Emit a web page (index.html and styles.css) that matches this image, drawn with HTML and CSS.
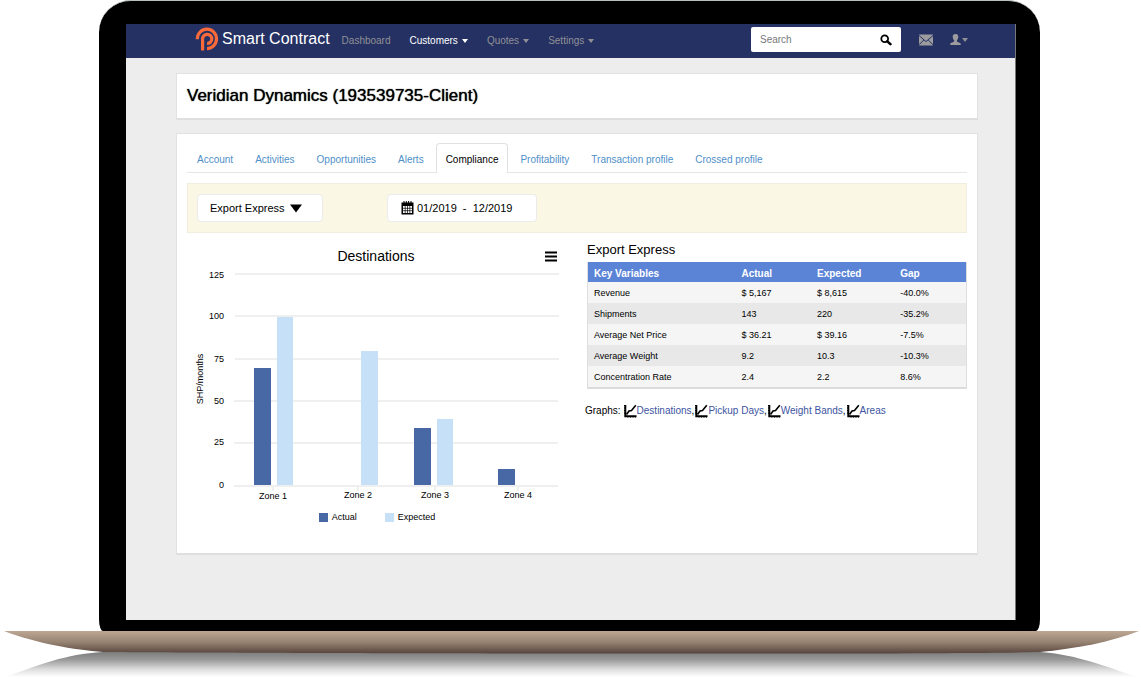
FILE: index.html
```html
<!DOCTYPE html>
<html lang="en">
<head>
<meta charset="utf-8">
<title>Smart Contract</title>
<link rel="stylesheet" href="styles.css">
</head>
<body>
<div class="laptop">
  <div class="screen">
    <header class="navbar">
      <div class="brand">
        <svg class="logo" viewBox="0 0 24 24" aria-hidden="true"><path d="M2.3 12.2A9.6 9.7 0 1 1 12 21.6M7.6 23.6V12A4.6 4.6 0 1 1 12 16.5"/></svg>
        <span>Smart Contract</span>
      </div>
      <nav class="menu">
        <a href="#">Dashboard</a>
        <a href="#" class="current">Customers<i class="caret"></i></a>
        <a href="#">Quotes<i class="caret"></i></a>
        <a href="#">Settings<i class="caret"></i></a>
      </nav>
      <form class="search">
        <input type="text" placeholder="Search" aria-label="Search">
        <button type="button" aria-label="Run search">
          <svg width="12" height="12" viewBox="0 0 12 12"><circle cx="4.7" cy="4.7" r="3.4" fill="none" stroke="#000" stroke-width="1.8"/><path d="M7.3 7.3L10.4 10.2" stroke="#000" stroke-width="2.5" stroke-linecap="round"/></svg>
        </button>
      </form>
      <button type="button" class="tool" aria-label="Messages">
        <svg width="14" height="12" viewBox="0 0 14 12"><path class="grey" d="M0 0.5H14V11.5H0Z"/><path d="M0 1.5L7 7.6L14 1.5M0 10.8L4.8 6M14 10.8L9.2 6" fill="none" stroke="#253162" stroke-width="1"/></svg>
      </button>
      <button type="button" class="tool" aria-label="Profile">
        <svg width="11" height="11" viewBox="0 0 11 11"><path class="grey" d="M5.5 0C7.6 0 8.4 1.3 8.3 3C8.2 4.6 7.5 5.6 6.9 6.3V7.4C7.5 8.2 10.4 8.4 10.7 9.6V11H0.3V9.6C0.6 8.4 3.5 8.2 4.1 7.4V6.3C3.5 5.6 2.8 4.6 2.7 3C2.6 1.3 3.4 0 5.5 0Z"/></svg>
        <i class="caret"></i>
      </button>
    </header>
    <main class="content">
      <section class="card heading">
        <h1>Veridian Dynamics (193539735-Client)</h1>
      </section>
      <section class="card panel">
        <nav class="tabs">
          <a href="#">Account</a>
          <a href="#">Activities</a>
          <a href="#">Opportunities</a>
          <a href="#">Alerts</a>
          <a href="#" class="active">Compliance</a>
          <a href="#">Profitability</a>
          <a href="#">Transaction profile</a>
          <a href="#">Crossed profile</a>
        </nav>
        <div class="filters">
          <div class="field product">
            <select aria-label="Product"><option>Export Express</option></select>
            <svg width="12" height="9" viewBox="0 0 12 9" aria-hidden="true"><path d="M0 0.5H12L6 8.5Z"/></svg>
          </div>
          <label class="field period">
            <svg width="13" height="14" viewBox="0 0 13 14" aria-hidden="true"><path d="M0.5 1.5H12.5V13.5H0.5Z"/><path fill="#fff" d="M2 5H11V12H2Z"/><path fill="none" stroke="#000" stroke-width="0.7" d="M4.2 5V12M6.5 5V12M8.8 5V12M2 7.3H11M2 9.7H11"/><path stroke="#000" stroke-width="1" d="M3 0V2M5.3 0V2M7.6 0V2M10 0V2"/></svg>
            <input type="text" value="01/2019  -  12/2019" aria-label="Period">
          </label>
        </div>
        <div class="report">
          <section class="chart">
            <div class="chart-head">
              <h2>Destinations</h2>
              <button type="button" aria-label="Chart menu">
                <svg width="12" height="11" viewBox="0 0 12 11"><path d="M0 1.5H12M0 5.5H12M0 9.5H12" stroke="#000" stroke-width="2"/></svg>
              </button>
            </div>
            <svg class="plot" viewBox="0 0 380 236" role="img" aria-label="Shipments per month by zone">
              <path class="grid" d="M48 8H372M48 50H372M48 93H372M47 135H371M47 177H371M47 220H371M86 220V225M171 220V225M248 220V225M331 220V225"/>
              <g class="actual">
                <rect x="67" y="102" width="17" height="117"/>
                <rect x="227" y="162" width="17" height="57"/>
                <rect x="311" y="203" width="17" height="16"/>
              </g>
              <g class="expected">
                <rect x="90" y="51" width="16" height="168"/>
                <rect x="174" y="85" width="17" height="134"/>
                <rect x="250" y="153" width="16" height="66"/>
              </g>
              <g class="ticks">
                <text x="37" y="12">125</text>
                <text x="37" y="53">100</text>
                <text x="37" y="96">75</text>
                <text x="37" y="138">50</text>
                <text x="37" y="179">25</text>
                <text x="37" y="222">0</text>
              </g>
              <g class="zones">
                <text x="86" y="233">Zone 1</text>
                <text x="171" y="232">Zone 2</text>
                <text x="248" y="232">Zone 3</text>
                <text x="331" y="232">Zone 4</text>
                <text transform="translate(16 113) rotate(-90)">SHP/months</text>
              </g>
            </svg>
            <div class="legend">
              <span><i class="swatch dark"></i>Actual</span>
              <span><i class="swatch light"></i>Expected</span>
            </div>
          </section>
          <section class="summary">
            <h3>Export Express</h3>
            <table>
              <thead>
                <tr><th class="name">Key Variables</th><th class="now">Actual</th><th class="plan">Expected</th><th>Gap</th></tr>
              </thead>
              <tbody>
                <tr><td>Revenue</td><td>$ 5,167</td><td>$ 8,615</td><td>-40.0%</td></tr>
                <tr><td>Shipments</td><td>143</td><td>220</td><td>-35.2%</td></tr>
                <tr><td>Average Net Price</td><td>$ 36.21</td><td>$ 39.16</td><td>-7.5%</td></tr>
                <tr><td>Average Weight</td><td>9.2</td><td>10.3</td><td>-10.3%</td></tr>
                <tr><td>Concentration Rate</td><td>2.4</td><td>2.2</td><td>8.6%</td></tr>
              </tbody>
            </table>
            <svg class="defs" aria-hidden="true">
              <symbol id="graph" viewBox="0 0 13 14"><path d="M1.3 1V12.3H12.5" fill="none" stroke="#000" stroke-width="2"/><path d="M0 1.5H2M0 4H2M0 6.5H2M0 9H2M4 13.5V12M6.5 13.5V12M9 13.5V12M11.5 13.5V12" stroke="#000"/><path d="M2.5 10.5L5 7L7.5 6.5L11.8 1.2" fill="none" stroke="#000" stroke-width="1.6"/></symbol>
            </svg>
            <p class="graphs">
              <span class="lead">Graphs:</span>
              <span><svg><use href="#graph"/></svg><a href="#">Destinations</a>,</span>
              <span><svg><use href="#graph"/></svg><a href="#">Pickup Days</a>,</span>
              <span><svg><use href="#graph"/></svg><a href="#">Weight Bands</a>,</span>
              <span><svg><use href="#graph"/></svg><a href="#">Areas</a></span>
            </p>
          </section>
        </div>
      </section>
    </main>
  </div>
</div>
<svg class="base" viewBox="0 0 1141 48" preserveAspectRatio="none" aria-hidden="true">
  <defs>
    <linearGradient id="metal" x1="0" y1="0" x2="0" y2="1">
      <stop offset="0" stop-color="#bda793"/>
      <stop offset="0.5" stop-color="#978372"/>
      <stop offset="1" stop-color="#56433c"/>
    </linearGradient>
    <linearGradient id="shade" x1="0" y1="0" x2="0" y2="1">
      <stop offset="0" stop-color="#7c7c7c"/>
      <stop offset="0.3" stop-color="#999"/>
      <stop offset="0.7" stop-color="#dedede"/>
      <stop offset="1" stop-color="#fff"/>
    </linearGradient>
  </defs>
  <path fill="url(#shade)" d="M5 46C40 34 65 23 103 21H1040C1070 23 1095 31 1136 46Z"/>
  <path fill="url(#metal)" d="M4 0H1139C1110 11 1080 17 1040 21C900 24 250 22 103 21C75 19 35 12 4 0Z"/>
</svg>
</body>
</html>
```
FILE: styles.css
```css
* { box-sizing: border-box; }

body {
  margin: 0;
  background: #fff;
  color: #000;
  font-family: "Liberation Sans", Arial, sans-serif;
  font-size: 10px;
  line-height: 12px;
}

a { color: inherit; text-decoration: none; }
h1, h2, h3, p { margin: 0; font-weight: normal; }
svg { display: block; flex: none; }

button {
  padding: 0;
  border: 0;
  background: none;
  cursor: pointer;
}

input, select {
  min-width: 0;
  padding: 0;
  border: 0;
  outline: 0;
  background: none;
  color: inherit;
  font: inherit;
}

.laptop {
  margin: 0 101px 0 99px;
  padding: 23px 24px 11px 27px;
  border-top: 1px solid #b8c0bd;
  border-radius: 32px 32px 4px 4px / 32px 32px 12px 12px;
  background: #000;
}

.screen {
  border-right: 1px solid #777;
  background: #ededed;
}

/* Top bar */
.navbar {
  display: flex;
  align-items: center;
  height: 34px;
  padding: 0 47px 0 69px;
  background: #253162;
  color: #909096;
}

.brand {
  display: flex;
  align-items: center;
  gap: 3px;
  margin-right: 12px;
  color: #fff;
  font-size: 16px;
  line-height: 28px;
  white-space: nowrap;
}

.logo {
  width: 24px;
  height: 24px;
  margin-top: -4px;
  fill: none;
  stroke: #fb6a3a;
  stroke-width: 3.2;
}

.brand span { margin-top: -4px; }
.menu { display: flex; gap: 19px; }
.menu a { display: flex; align-items: center; gap: 4px; }
.menu .current { color: #fff; }

.caret {
  border: 3px solid transparent;
  border-top: 4px solid currentColor;
  border-bottom: 0;
}

.search {
  display: flex;
  align-items: center;
  width: 150px;
  height: 25px;
  margin: 0 18px 3px auto;
  padding: 0 9px;
  border-radius: 2px;
  background: #fff;
}

.search input { flex: 1; color: #333; }
.search input::placeholder { color: #77777b; opacity: 1; }

.tool {
  display: flex;
  align-items: center;
  gap: 1px;
  margin-bottom: 3px;
  color: #909096;
}

.tool + .tool { margin-left: 17px; }
.grey { fill: #9c9c9e; }

/* Page */
.content { padding: 15px 37px 65px 50px; }

.card {
  border: 1px solid #e2e2e2;
  border-bottom: 2px solid #dfdfdf;
  background: #fff;
}

.heading { padding: 12px 10px; }

.heading h1 {
  font-size: 17px;
  line-height: 20px;
  text-shadow: 0 0 1px #000;
}

.panel { margin-top: 13px; padding: 9px 10px 30px; }

.tabs {
  display: flex;
  gap: 2px;
  border-bottom: 1px solid #e6e6e6;
  color: #4f8fc8;
}

.tabs a {
  margin-bottom: -1px;
  padding: 10px 9px 7px;
  border: 1px solid transparent;
  border-bottom: 0;
}

.tabs .active {
  border-color: #e0e0e0;
  border-radius: 4px 4px 0 0;
  background: #fff;
  color: #000;
}

.filters {
  display: flex;
  gap: 64px;
  margin-top: 10px;
  padding: 10px 9px;
  border: 1px solid #f1eedf;
  background: #faf7e4;
}

.field {
  height: 28px;
  border: 1px solid #ebebeb;
  border-radius: 4px;
  background: #fff;
  font-size: 11px;
}

.product { display: grid; align-items: center; width: 126px; }
.product > * { grid-area: 1 / 1; }
.product select { height: 26px; padding-left: 12px; appearance: none; }
.product svg { justify-self: end; margin-right: 20px; pointer-events: none; }

.period {
  display: flex;
  align-items: center;
  gap: 3px;
  width: 150px;
  padding-left: 13px;
}

.period input { flex: 1; white-space: pre; }

.report {
  display: grid;
  grid-template-columns: 1fr 1fr;
  gap: 20px;
}

/* Chart */
.chart-head {
  display: grid;
  grid-template-columns: 1fr auto 1fr;
  align-items: center;
  padding: 15px 10px 2px 8px;
}

.chart-head h2 { grid-column: 2; font-size: 14px; line-height: 16px; }
.chart-head button { justify-self: end; }

.plot { width: 100%; font-size: 9px; }
.grid { fill: none; stroke: #efefef; stroke-width: 2; }
.actual { fill: #4768a4; }
.expected { fill: #c6e0f7; }
.ticks { text-anchor: end; }
.zones { text-anchor: middle; }

.legend {
  display: flex;
  justify-content: center;
  gap: 28px;
  margin-top: 9px;
  font-size: 9px;
}

.legend span { display: flex; align-items: center; gap: 4px; }
.swatch { width: 9px; height: 9px; }
.dark { background: #4768a4; }
.light { background: #c6e0f7; }

/* Summary */
.summary h3 { padding-top: 8px; font-size: 13px; line-height: 18px; }

table {
  width: 100%;
  margin-top: 3px;
  border: 1px solid #dedede;
  border-top: 0;
  border-bottom: 2px solid #dcdcdc;
  border-spacing: 0;
  table-layout: fixed;
  font-size: 9px;
}

th {
  height: 20px;
  padding: 3px 6px 0;
  background: #5b84d7;
  color: #fff;
  font-size: 10px;
  text-align: left;
}

td { height: 21px; padding: 0 6px; background: #f5f5f5; }
tr:nth-child(even) td { background: #e8e8e8; }
.name { width: 39%; }
.now { width: 20%; }
.plan { width: 22%; }

.defs { width: 0; height: 0; }

.graphs {
  display: flex;
  flex-wrap: wrap;
  gap: 1px;
  margin: 15px 0 0 -2px;
}

.graphs span { display: flex; align-items: center; }
.graphs .lead { margin-right: 2px; }
.graphs svg { width: 13px; height: 14px; }
.graphs a { color: #3c54a0; }

.base { width: 100%; height: 48px; }
```
